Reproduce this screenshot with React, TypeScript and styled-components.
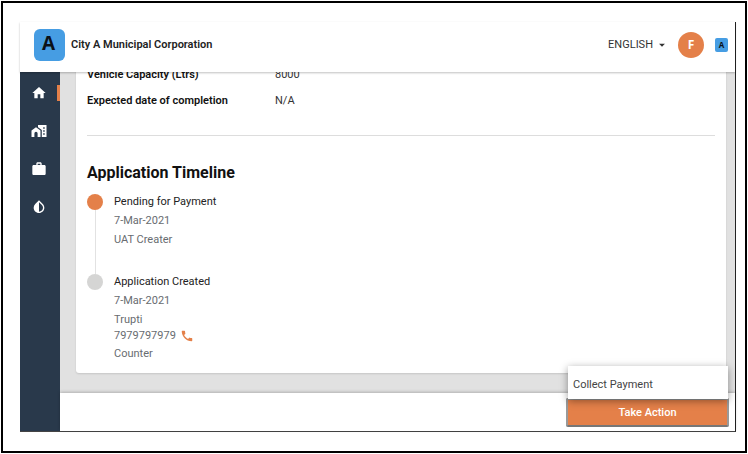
import React from "react";
import styled, { createGlobalStyle } from "styled-components";
import { MdHome, MdWork, MdCall, MdArrowDropDown } from "react-icons/md";

const GlobalStyle = createGlobalStyle`
  *, *::before, *::after { box-sizing: border-box; }
  body { margin: 0; background: #fff; color: #222; font: 11px/16px Roboto, "Liberation Sans", sans-serif; }
  button { font: inherit; }
`;

const Page = styled.div`
  display: flex;
  height: 100vh;
  padding: 1px;
`;

const Frame = styled.div`
  display: flex;
  flex: 1;
  min-width: 0;
  border: 2px solid #000;
  padding: 19px 9px 19px 17px;
`;

const Shell = styled.div`
  display: flex;
  flex-direction: column;
  flex: 1;
  min-width: 0;
  border-right: 1px solid #222;
  border-bottom: 1px solid #444;
`;

const Header = styled.header`
  display: flex;
  align-items: center;
  flex: none;
  height: 50px;
  padding: 0 7px 4px 14px;
  background: #fff;
  box-shadow: 0 1px 2px rgba(0, 0, 0, 0.25);
  z-index: 1;
`;

const Logo = styled.div<{ $small?: boolean }>`
  display: flex;
  align-items: center;
  justify-content: center;
  flex: none;
  width: ${(p) => (p.$small ? 13 : 31)}px;
  height: ${(p) => (p.$small ? 14 : 32)}px;
  padding-bottom: ${(p) => (p.$small ? 1 : 3)}px;
  padding-right: ${(p) => (p.$small ? 0 : 2)}px;
  border-radius: ${(p) => (p.$small ? 2 : 6)}px;
  background: #469de3;
  color: #0b1118;
  font-family: "Open Sans", sans-serif;
  font-weight: 700;
  font-size: ${(p) => (p.$small ? 8 : 19)}px;
  line-height: 1;
`;

const City = styled.h1`
  flex: 1;
  margin: 0 0 0 6px;
  font-size: 11px;
  line-height: 16px;
  font-weight: 600;
`;

const Language = styled.button`
  display: flex;
  align-items: center;
  gap: 2px;
  margin-right: 9px;
  padding: 0;
  border: 0;
  background: none;
  color: #333;
`;

const Avatar = styled.button`
  width: 26px;
  height: 26px;
  margin-right: 11px;
  padding: 0;
  border: 0;
  border-radius: 50%;
  background: #e48049;
  color: #fff;
  font: 700 12px/26px "Open Sans", sans-serif;
`;

const Body = styled.div`
  display: flex;
  flex: 1;
  min-height: 0;
`;

const Sidebar = styled.nav`
  display: flex;
  flex-direction: column;
  flex: none;
  width: 40px;
  padding-top: 2px;
  background: #29394b;
`;

const NavLink = styled.a<{ $active?: boolean }>`
  display: flex;
  align-items: center;
  justify-content: center;
  height: 38px;
  padding-right: 3px;
  color: #fff;
  ${(p) => p.$active && `
    background: linear-gradient(#e48049, #e48049) right center / 3px 16px no-repeat;
  `}
`;

const Content = styled.div`
  display: flex;
  flex-direction: column;
  flex: 1;
  min-width: 0;
`;

const Scroller = styled.main`
  display: flex;
  flex-direction: column;
  justify-content: flex-end;
  flex: 1;
  min-height: 0;
  overflow: hidden;
  padding: 0 9px 20px 16px;
  background: #e1e1e1;
`;

const Card = styled.section`
  flex: none;
  padding: 12px 11px 11px;
  border-radius: 3px;
  background: #fff;
  box-shadow: 0 1px 2px rgba(0, 0, 0, 0.12);
`;

const Details = styled.dl`
  display: grid;
  grid-template-columns: 188px 1fr;
  row-gap: 10px;
  margin: 0;
  padding-bottom: 26px;
  border-bottom: 1px solid #ddd;
  dt { color: #111; font-weight: 600; }
  dd { margin: 0; color: #333; }
`;

const Heading = styled.h2`
  margin: 26px 0 10px;
  color: #111;
  font-size: 16px;
  line-height: 22px;
  font-weight: 700;
`;

const Timeline = styled.ol`
  list-style: none;
  margin: 0;
  padding: 0;
`;

const Step = styled.li`
  display: flex;
  gap: 11px;
`;

const Rail = styled.div<{ $current?: boolean }>`
  display: flex;
  flex-direction: column;
  align-items: center;
  flex: none;
  width: 16px;
  &::before {
    content: "";
    width: 16px;
    height: 16px;
    border-radius: 50%;
    background: ${(p) => (p.$current ? "#e48049" : "#d5d5d4")};
  }
  &::after {
    content: "";
    flex: 1;
    width: 1px;
    background: ${(p) => (p.$current ? "#e2e2e2" : "transparent")};
  }
`;

const StepBody = styled.div<{ $spaced?: boolean }>`
  display: flex;
  flex-direction: column;
  gap: 3px;
  padding-bottom: ${(p) => (p.$spaced ? 26 : 0)}px;
  color: #686c70;
`;

const StepTitle = styled.div`
  color: #222;
`;

const Phone = styled.a`
  display: flex;
  align-items: center;
  gap: 4px;
  height: 15px;
  color: inherit;
  text-decoration: none;
  svg { color: #e48049; }
`;

const Footer = styled.footer`
  display: flex;
  justify-content: flex-end;
  flex: none;
  padding: 5px 6px 4px 0;
  background: #fff;
  box-shadow: 0 -1px 3px rgba(0, 0, 0, 0.22);
`;

const Action = styled.div`
  position: relative;
  width: 163px;
`;

const Menu = styled.div`
  position: absolute;
  right: 1px;
  bottom: 28px;
  left: 2px;
  background: #fff;
  box-shadow: 0 2px 8px rgba(0, 0, 0, 0.4);
`;

const MenuItem = styled.button`
  display: block;
  width: 100%;
  padding: 11px 5px 6px;
  border: 0;
  background: none;
  color: #444;
  line-height: 16px;
  text-align: left;
`;

const ActionButton = styled.button`
  display: block;
  width: 100%;
  height: 29px;
  padding: 0;
  border: 2px solid #999;
  border-bottom-color: #777;
  border-radius: 2px;
  background: #e48049;
  color: #fff;
  font-weight: 500;
`;

const HomeIcon = () => <MdHome size={16} />;

const PropertyIcon = () => (
  <svg width="16" height="14" viewBox="0 0 16 14" fill="currentColor" aria-hidden="true">
    <path d="M5 3.2 0.5 6.6V13H3.4V9.4a1.6 1.6 0 0 1 3.2 0V13H9.5V6.6Z" />
    <path
      fillRule="evenodd"
      d="M7 1H15.5V13H10.8V6.1L7 3.3ZM12.2 3.2V4.7H13.7V3.2ZM12.2 6.2V7.7H13.7V6.2ZM12.2 9.2V10.7H13.7V9.2Z"
    />
  </svg>
);

const WorkIcon = () => <MdWork size={16} />;

const WaterIcon = () => (
  <svg width="16" height="16" viewBox="0 0 24 24" fill="currentColor" aria-hidden="true">
    <path
      fillRule="evenodd"
      d="M12 2 6.35 7.56A7.8 7.8 0 0 0 4 13.13C4 17.48 7.58 21 12 21s8-3.52 8-7.87c0-2.17-.9-4.14-2.35-5.57ZM12 4.81V19c3.31 0 6-2.63 6-5.87 0-1.56-.62-3.03-1.75-4.14Z"
    />
  </svg>
);

const navigation = [
  { label: "Home", Icon: HomeIcon },
  { label: "Property", Icon: PropertyIcon },
  { label: "Work", Icon: WorkIcon },
  { label: "Water", Icon: WaterIcon },
];

export default function App() {
  return (
    <Page>
      <GlobalStyle />
      <Frame>
        <Shell>
          <Header>
            <Logo>A</Logo>
            <City>City A Municipal Corporation</City>
            <Language>ENGLISH <MdArrowDropDown size={14} /></Language>
            <Avatar aria-label="Account">F</Avatar>
            <Logo $small>A</Logo>
          </Header>
          <Body>
            <Sidebar>
              {navigation.map(({ label, Icon }, i) => (
                <NavLink key={label} href="#" aria-label={label} $active={i === 0}>
                  <Icon />
                </NavLink>
              ))}
            </Sidebar>
            <Content>
              <Scroller>
                <Card>
                  <Details>
                    <dt>Vehicle Capacity (Ltrs)</dt>
                    <dd>8000</dd>
                    <dt>Expected date of completion</dt>
                    <dd>N/A</dd>
                  </Details>
                  <Heading>Application Timeline</Heading>
                  <Timeline>
                    <Step>
                      <Rail $current />
                      <StepBody $spaced>
                        <StepTitle>Pending for Payment</StepTitle>
                        <div>7-Mar-2021</div>
                        <div>UAT Creater</div>
                      </StepBody>
                    </Step>
                    <Step>
                      <Rail />
                      <StepBody>
                        <StepTitle>Application Created</StepTitle>
                        <div>7-Mar-2021</div>
                        <div>
                          Trupti
                          <Phone href="tel:7979797979">7979797979 <MdCall size={14} /></Phone>
                        </div>
                        <div>Counter</div>
                      </StepBody>
                    </Step>
                  </Timeline>
                </Card>
              </Scroller>
              <Footer>
                <Action>
                  <Menu><MenuItem>Collect Payment</MenuItem></Menu>
                  <ActionButton>Take Action</ActionButton>
                </Action>
              </Footer>
            </Content>
          </Body>
        </Shell>
      </Frame>
    </Page>
  );
}
